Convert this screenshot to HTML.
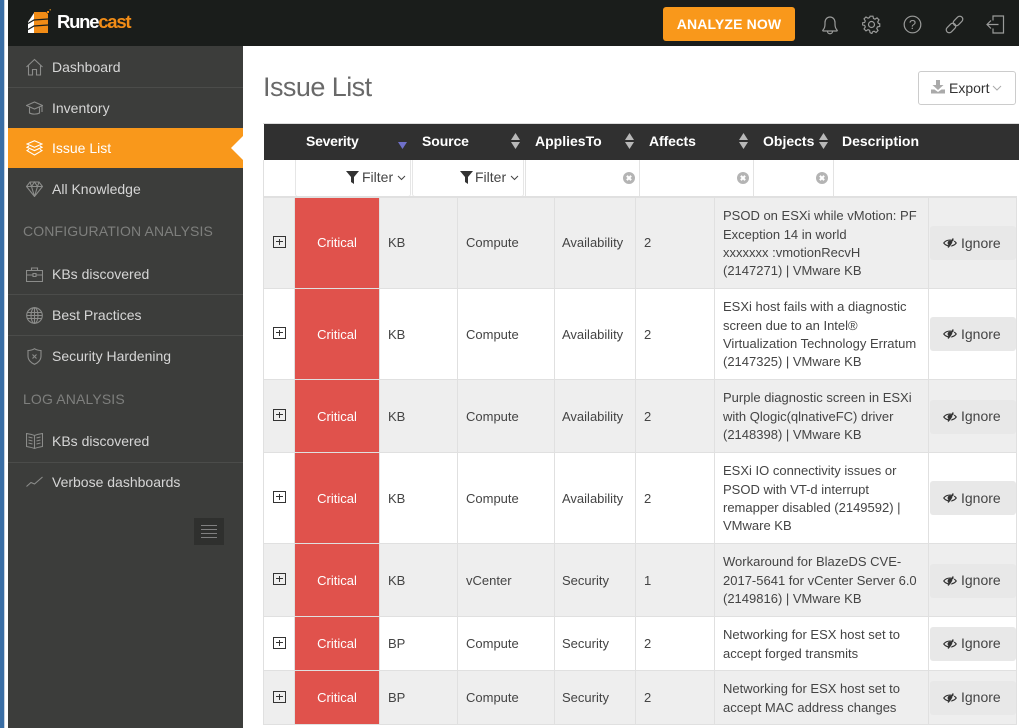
<!DOCTYPE html>
<html><head><meta charset="utf-8"><title>Runecast - Issue List</title>
<style>
*{box-sizing:border-box}
html,body{margin:0;padding:0;width:1019px;height:728px;overflow:hidden;background:#fff;font-family:"Liberation Sans",Arial,sans-serif}
.a{position:absolute}
#blue{left:0;top:0;width:4px;height:728px;background:#3a6ea5}
#blue2{left:4px;top:0;width:1px;height:728px;background:#c9d3de}
#top{left:8px;top:0;width:1011px;height:46px;background:#1a1d1b}
#side{left:8px;top:46px;width:235px;height:682px;background:#3c3d3b}
.mi{position:absolute;left:52px;font-size:14px;line-height:20px;color:#d6d6d6;white-space:nowrap}
.sec{position:absolute;left:23px;font-size:14px;line-height:20px;letter-spacing:.14px;color:#7e7f7d;white-space:nowrap}
.dv{position:absolute;left:8px;width:235px;height:1px;background:#4b4c4a}
.ic{position:absolute;fill:none;stroke:#8b8c8a;stroke-width:1.1}
.th{position:absolute;top:131px;font-size:14px;font-weight:bold;line-height:20px;color:#fff;white-space:nowrap}
.r{position:absolute;left:263px;width:754px;border-left:1px solid #e0e0e0;border-right:1px solid #e0e0e0;border-bottom:1px solid #e0e0e0}
.g{background:#eee}.w{background:#fff}
.c{position:absolute;top:0;bottom:0;display:flex;align-items:center;font-size:13px;line-height:18.4px;color:#444;border-right:1px solid #e0e0e0;padding-top:2px}
.f .c{padding-top:0}
.f .c7{padding-top:2px}
.c1{left:0;width:31px}
.c2{left:31px;width:85px;background:#e0524c;color:#fff;justify-content:center;border-right:1px solid #e0e0e0}
.c3{left:116px;width:78px;padding-left:8px}
.c4{left:194px;width:97px;padding-left:8px}
.c5{left:291px;width:81px;padding-left:7px}
.c6{left:372px;width:79px;padding-left:8px}
.c7{left:451px;width:214px;padding-left:8px;padding-right:4px;white-space:nowrap}
.c8{left:665px;width:87px;border-right:0;padding:0}
.p{position:absolute;left:9px;width:13px;height:12px;border:1px solid #333}
.p:before{content:"";position:absolute;left:2px;right:2px;top:4px;height:1px;background:#333}
.p:after{content:"";position:absolute;top:2px;bottom:2px;left:5px;width:1px;background:#333}
.ig{position:absolute;left:1px;width:86px;height:34px;background:#e8e8e8;border-radius:3px;font-size:14px;color:#444;line-height:34px;padding-left:31px}
.ig.s{line-height:33px}
.ig svg{position:absolute;left:13px;top:12px}
.flt{position:absolute;top:160px;height:37px;background:#fff;border:1px solid #e6e6e6;border-top:0;border-radius:0 0 3px 3px;font-size:14px;color:#444;line-height:35px}
.cl{position:absolute;top:172px;width:12px;height:12px;border-radius:50%;background:#b4b4b4}
.cl:before,.cl:after{content:"";position:absolute;left:3px;top:5px;width:6px;height:2px;background:#fff;transform:rotate(45deg)}
.cl:after{transform:rotate(-45deg)}
.vl{position:absolute;top:160px;width:1px;height:37px;background:#e3e3e3}
</style></head><body>
<svg width="0" height="0" style="position:absolute"><symbol id="eye" viewBox="0 0 15 10"><path d="M.8 5C4 .8 11 .8 14.200 5 11 9.200 4 9.200 .8 5Z" fill="none" stroke="#333" stroke-width="1.200"/><circle cx="7.500" cy="5" r="2.600" fill="#333"/><path d="M11 .2L5.500 9.800" fill="none" stroke="#333" stroke-width="1.500"/><path d="M12.300 1.500L7.500 9.500" fill="none" stroke="#e8e8e8" stroke-width=".8"/></symbol></svg>
<div class="a" id="blue"></div><div class="a" id="blue2"></div>
<div class="a" id="top"></div>
<div class="a" id="side"></div>

<!-- logo -->
<svg class="a" style="left:27px;top:9px" width="26" height="26" viewBox="0 0 26 26">
<path d="M7 4V24H1V13Z" fill="#fff"/>
<path d="M7 3H19L21 5V24H7Z" fill="#f28c16"/>
<path d="M1 14.500L7 11 21 10M1 20.500L7 17 21 16" fill="none" stroke="#1a1d1b" stroke-width="1.300"/>
<rect x="20" y="2" width="2" height="2" fill="#f28c16"/><rect x="22.500" y="0" width="1.500" height="1.500" fill="#a8701e"/>
</svg>
<div class="a" style="left:57px;top:10px;font-size:18.5px;line-height:24px;font-weight:bold;letter-spacing:-1.25px;color:#fff;white-space:nowrap">Rune<span style="color:#f28c16">cast</span></div>

<!-- top right -->
<div class="a" style="left:663px;top:7px;width:132px;height:34px;background:#f9981b;border-radius:3px;color:#fff;font-weight:bold;font-size:14px;letter-spacing:.15px;line-height:34px;text-align:center">ANALYZE NOW</div>
<svg class="a" style="left:820px;top:14px" width="20" height="22" viewBox="0 0 20 22" fill="none" stroke="#9a9b9a" stroke-width="1.2"><path d="M3 16c1.500-1.500 2-3 2-6V8.500c0-3 2-5.500 5-5.500s5 2.500 5 5.500V10c0 3 .5 4.500 2 6 .5.500.3 1-.3 1H3.300c-.6 0-.8-.5-.3-1Z"/><path d="M7.500 17.500c0 3 5 3 5 0"/></svg>
<svg class="a" style="left:862px;top:15px" width="19" height="19" viewBox="0 0 19 19" fill="none" stroke="#9a9b9a" stroke-width="1.2"><path d="M8 1h3l.5 2.400 1.600.7 2.100-1.300 2 2-1.300 2.100.7 1.600L18 8.900v2.700l-2.400.5-.7 1.600 1.300 2.100-2 2-2.100-1.300-1.600.7L9.900 19 8 18l-.5-2.400-1.600-.7-2.100 1.300-2-2 1.300-2.100-.7-1.600L0 10V8l2.400-.5.7-1.600L1.800 3.800l2-2 2.100 1.300 1.600-.7Z" transform="translate(.3 .2) scale(.97)"/><circle cx="9.500" cy="9.500" r="3"/></svg>
<svg class="a" style="left:903px;top:15px" width="19" height="19" viewBox="0 0 19 19"><circle cx="9.500" cy="9.500" r="8.300" fill="none" stroke="#9a9b9a" stroke-width="1.200"/><text x="9.500" y="14" font-size="13" font-family="Liberation Sans" text-anchor="middle" fill="#9a9b9a">?</text></svg>
<svg class="a" style="left:945px;top:15px" width="19" height="19" viewBox="0 0 19 19" fill="none" stroke="#9a9b9a" stroke-width="1.200"><rect x="10" y="0.500" width="6" height="11" rx="3" transform="rotate(45 13 6)"/><rect x="3" y="7.500" width="6" height="11" rx="3" transform="rotate(45 6 13)"/></svg>
<svg class="a" style="left:986px;top:15px" width="19" height="19" viewBox="0 0 19 19" fill="none" stroke="#9a9b9a" stroke-width="1.200"><path d="M7 5.500V1H17.500V18H7V13.500"/><path d="M12.500 9.500H1M5 5.500L1 9.500L5 13.500"/></svg>

<!-- sidebar -->
<div class="a" style="left:8px;top:128px;width:235px;height:40px;background:#f9981b"></div>
<svg class="a" style="left:231px;top:136px" width="12" height="24"><path d="M12 0V24L0 12Z" fill="#fff"/></svg>
<div class="dv" style="top:87px"></div><div class="dv" style="top:294px"></div><div class="dv" style="top:335px"></div><div class="dv" style="top:462px"></div>

<svg class="ic" style="left:26px;top:58px" width="17" height="18" viewBox="0 0 17 18"><path d="M.5 9L8.500 1.500 16.500 9M2.500 7.500V17H6.500V11.500H10.500V17H14.500V7.500"/></svg>
<div class="mi" style="top:57px">Dashboard</div>
<svg class="ic" style="left:26px;top:101px" width="17" height="14" viewBox="0 0 17 14"><path d="M.5 4.500L8.500 1 16.500 4.500 8.500 8Z M3.500 6.500V12C6 13.500 11 13.500 13.500 12V6.500M16 5V11"/></svg>
<div class="mi" style="top:98px">Inventory</div>
<svg class="ic" style="left:26px;top:140px;stroke:#fff" width="17" height="16" viewBox="0 0 17 16"><path d="M8.500.7L16 4 8.500 7.300 1 4Z M3 6L1 7.300 8.500 10.600 16 7.300 14 6M3 9.300L1 10.600 8.500 15 16 10.600 14 9.300"/></svg>
<div class="mi" style="top:138px;color:#fff">Issue List</div>
<svg class="ic" style="left:26px;top:181px" width="17" height="16" viewBox="0 0 17 16"><path d="M4 1H13L16.500 5.500 8.500 15.500 .5 5.500ZM.5 5.500H16.500M5.500 5.500L8.500 15.500 11.500 5.500M4 1L5.500 5.500 8.500 1 11.500 5.500 13 1"/></svg>
<div class="mi" style="top:179px">All Knowledge</div>

<div class="sec" style="top:221px">CONFIGURATION ANALYSIS</div>
<svg class="ic" style="left:26px;top:267px" width="17" height="15" viewBox="0 0 17 15"><path d="M.5 3.500H16.500V14.500H.5ZM5.500 3.500V1H11.500V3.500M.5 8H7M10 8H16.500M7 6.500H10V9.500H7Z"/></svg>
<div class="mi" style="top:264px">KBs discovered</div>
<svg class="ic" style="left:26px;top:307px" width="17" height="17" viewBox="0 0 17 17"><circle cx="8.500" cy="8.500" r="7.800"/><ellipse cx="8.500" cy="8.500" rx="3.500" ry="7.800"/><path d="M8.500.7V16.300M1.500 5.500H15.500M1.500 11.500H15.500M.7 8.500H16.300"/></svg>
<div class="mi" style="top:305px">Best Practices</div>
<svg class="ic" style="left:27px;top:348px" width="15" height="17" viewBox="0 0 15 17"><path d="M7.500.7C9.500 2 11.500 2.500 14 2.500V8C14 12 11 15 7.500 16.300 4 15 1 12 1 8V2.500C3.500 2.500 5.500 2 7.500.7ZM5.500 6.500L9.500 10.500M9.500 6.500L5.500 10.500"/></svg>
<div class="mi" style="top:346px">Security Hardening</div>

<div class="sec" style="top:389px">LOG ANALYSIS</div>
<svg class="ic" style="left:26px;top:433px" width="17" height="16" viewBox="0 0 17 16"><path d="M8.500 2.500C6 1.500 3.500 1 .5.500V13.500C3.500 14 6 14.500 8.500 15.500 11 14.500 13.500 14 16.500 13.500V.5C13.500 1 11 1.500 8.500 2.500ZM8.500 2.500V15.500M2.500 4L6.500 5M2.500 7L6.500 8M2.500 10L6.500 11M14.500 4L10.500 5M14.500 7L10.500 8M14.500 10L10.500 11"/></svg>
<div class="mi" style="top:431px">KBs discovered</div>
<svg class="ic" style="left:26px;top:476px" width="17" height="12" viewBox="0 0 17 12"><path d="M.5 10.500L5 6.500 8.500 8 16.500 1"/></svg>
<div class="mi" style="top:472px">Verbose dashboards</div>

<div class="a" style="left:194px;top:518px;width:30px;height:27px;background:#2f302e"></div>
<div class="a" style="left:201px;top:525px;width:16px;height:1px;background:#808080"></div>
<div class="a" style="left:201px;top:529px;width:16px;height:1px;background:#808080"></div>
<div class="a" style="left:201px;top:533px;width:16px;height:1px;background:#808080"></div>
<div class="a" style="left:201px;top:537px;width:16px;height:1px;background:#808080"></div>

<!-- title / export -->
<div class="a" style="left:263px;top:69px;font-size:27px;line-height:36px;letter-spacing:-.55px;color:#696969;white-space:nowrap">Issue List</div>
<div class="a" style="left:918px;top:71px;width:98px;height:34px;border:1px solid #ccc;border-radius:3px;background:#fff"></div>
<svg class="a" style="left:931px;top:80px" width="15" height="14" viewBox="0 0 15 14"><path d="M5 0H9V5H12.500L7 10 1.500 5H5Z M0 9.500H3.500L7 12 10.500 9.500H14V13.500H0Z" fill="#aaa"/></svg>
<div class="a" style="left:949px;top:78px;font-size:14px;line-height:20px;color:#333">Export</div>
<svg class="a" style="left:992px;top:85px" width="10" height="6" fill="none" stroke="#aaa"><path d="M1 1L5 5 9 1"/></svg>

<!-- table head -->
<div class="a" style="left:263px;top:123px;width:756px;height:1px;background:#ddd"></div>
<div class="a" style="left:264px;top:124px;width:755px;height:36px;background:#303030"></div>
<div class="th" style="left:306px;letter-spacing:-.25px">Severity</div>
<div class="th" style="left:422px;letter-spacing:-.1px">Source</div>
<div class="th" style="left:535px">AppliesTo</div>
<div class="th" style="left:649px;letter-spacing:-.1px">Affects</div>
<div class="th" style="left:763px">Objects</div>
<div class="th" style="left:842px">Description</div>
<svg class="a" style="left:398px;top:142px" width="9" height="7"><path d="M0 0H9L4.500 7Z" fill="#6f70c9"/></svg>
<svg class="a" style="left:511px;top:133px" width="9" height="16" fill="#b8b8b8"><path d="M4.500 0L9 7H0ZM0 9H9L4.500 16Z"/></svg>
<svg class="a" style="left:625px;top:133px" width="9" height="16" fill="#b8b8b8"><path d="M4.500 0L9 7H0ZM0 9H9L4.500 16Z"/></svg>
<svg class="a" style="left:739px;top:133px" width="9" height="16" fill="#b8b8b8"><path d="M4.500 0L9 7H0ZM0 9H9L4.500 16Z"/></svg>
<svg class="a" style="left:819px;top:133px" width="9" height="16" fill="#b8b8b8"><path d="M4.500 0L9 7H0ZM0 9H9L4.500 16Z"/></svg>

<!-- filter row -->
<div class="a" style="left:263px;top:160px;width:1px;height:38px;background:#e0e0e0"></div>
<div class="flt" style="left:295px;width:116px"><svg class="a" style="left:50px;top:11px" width="13" height="13"><path d="M0 0H13L8 6V13L5 11V6Z" fill="#333"/></svg><span class="a" style="left:66px;top:0">Filter</span><svg class="a" style="left:101px;top:15px" width="9" height="6" fill="none" stroke="#444"><path d="M1 1L4.500 4.500 8 1"/></svg></div>
<div class="flt" style="left:412px;width:112px"><svg class="a" style="left:47px;top:11px" width="13" height="13"><path d="M0 0H13L8 6V13L5 11V6Z" fill="#333"/></svg><span class="a" style="left:62px;top:0">Filter</span><svg class="a" style="left:97px;top:15px" width="9" height="6" fill="none" stroke="#444"><path d="M1 1L4.500 4.500 8 1"/></svg></div>
<div class="vl" style="left:525px"></div><div class="vl" style="left:639px"></div><div class="vl" style="left:753px"></div><div class="vl" style="left:833px"></div>
<div class="cl" style="left:623px"></div><div class="cl" style="left:737px"></div><div class="cl" style="left:816px"></div>
<div class="a" style="left:263px;top:196px;width:754px;height:2px;background:#e0e0e0"></div>

<!-- rows -->
<div class="r g f" style="top:198px;height:91px"><div class="c c1"><div class="p" style="top:38px"></div></div><div class="c c2">Critical</div><div class="c c3">KB</div><div class="c c4">Compute</div><div class="c c5">Availability</div><div class="c c6">2</div><div class="c c7"><div>PSOD on ESXi while vMotion: PF<br>Exception 14 in world<br>xxxxxxx :vmotionRecvH<br>(2147271) | VMware KB</div></div><div class="c c8"><div class="ig" style="top:28px"><svg width="14" height="10"><use href="#eye"/></svg>Ignore</div></div></div>

<div class="r w" style="top:289px;height:91px"><div class="c c1"><div class="p" style="top:38px"></div></div><div class="c c2">Critical</div><div class="c c3">KB</div><div class="c c4">Compute</div><div class="c c5">Availability</div><div class="c c6">2</div><div class="c c7"><div>ESXi host fails with a diagnostic<br>screen due to an Intel®<br>Virtualization Technology Erratum<br>(2147325) | VMware KB</div></div><div class="c c8"><div class="ig" style="top:28px"><svg width="14" height="10"><use href="#eye"/></svg>Ignore</div></div></div>

<div class="r g" style="top:380px;height:73px"><div class="c c1"><div class="p" style="top:29px"></div></div><div class="c c2">Critical</div><div class="c c3">KB</div><div class="c c4">Compute</div><div class="c c5">Availability</div><div class="c c6">2</div><div class="c c7"><div>Purple diagnostic screen in ESXi<br>with Qlogic(qlnativeFC) driver<br>(2148398) | VMware KB</div></div><div class="c c8"><div class="ig s" style="top:20px"><svg width="14" height="10"><use href="#eye"/></svg>Ignore</div></div></div>

<div class="r w" style="top:453px;height:91px"><div class="c c1"><div class="p" style="top:38px"></div></div><div class="c c2">Critical</div><div class="c c3">KB</div><div class="c c4">Compute</div><div class="c c5">Availability</div><div class="c c6">2</div><div class="c c7"><div>ESXi IO connectivity issues or<br>PSOD with VT-d interrupt<br>remapper disabled (2149592) |<br>VMware KB</div></div><div class="c c8"><div class="ig" style="top:28px"><svg width="14" height="10"><use href="#eye"/></svg>Ignore</div></div></div>

<div class="r g" style="top:544px;height:73px"><div class="c c1"><div class="p" style="top:29px"></div></div><div class="c c2">Critical</div><div class="c c3">KB</div><div class="c c4">vCenter</div><div class="c c5">Security</div><div class="c c6">1</div><div class="c c7"><div>Workaround for BlazeDS CVE-<br>2017-5641 for vCenter Server 6.0<br>(2149816) | VMware KB</div></div><div class="c c8"><div class="ig s" style="top:20px"><svg width="14" height="10"><use href="#eye"/></svg>Ignore</div></div></div>

<div class="r w" style="top:617px;height:54px"><div class="c c1"><div class="p" style="top:20px"></div></div><div class="c c2">Critical</div><div class="c c3">BP</div><div class="c c4">Compute</div><div class="c c5">Security</div><div class="c c6">2</div><div class="c c7"><div>Networking for ESX host set to<br>accept forged transmits</div></div><div class="c c8"><div class="ig s" style="top:10px"><svg width="14" height="10"><use href="#eye"/></svg>Ignore</div></div></div>

<div class="r g" style="top:671px;height:54px"><div class="c c1"><div class="p" style="top:20px"></div></div><div class="c c2">Critical</div><div class="c c3">BP</div><div class="c c4">Compute</div><div class="c c5">Security</div><div class="c c6">2</div><div class="c c7"><div>Networking for ESX host set to<br>accept MAC address changes</div></div><div class="c c8"><div class="ig s" style="top:10px"><svg width="14" height="10"><use href="#eye"/></svg>Ignore</div></div></div>
</body></html>
